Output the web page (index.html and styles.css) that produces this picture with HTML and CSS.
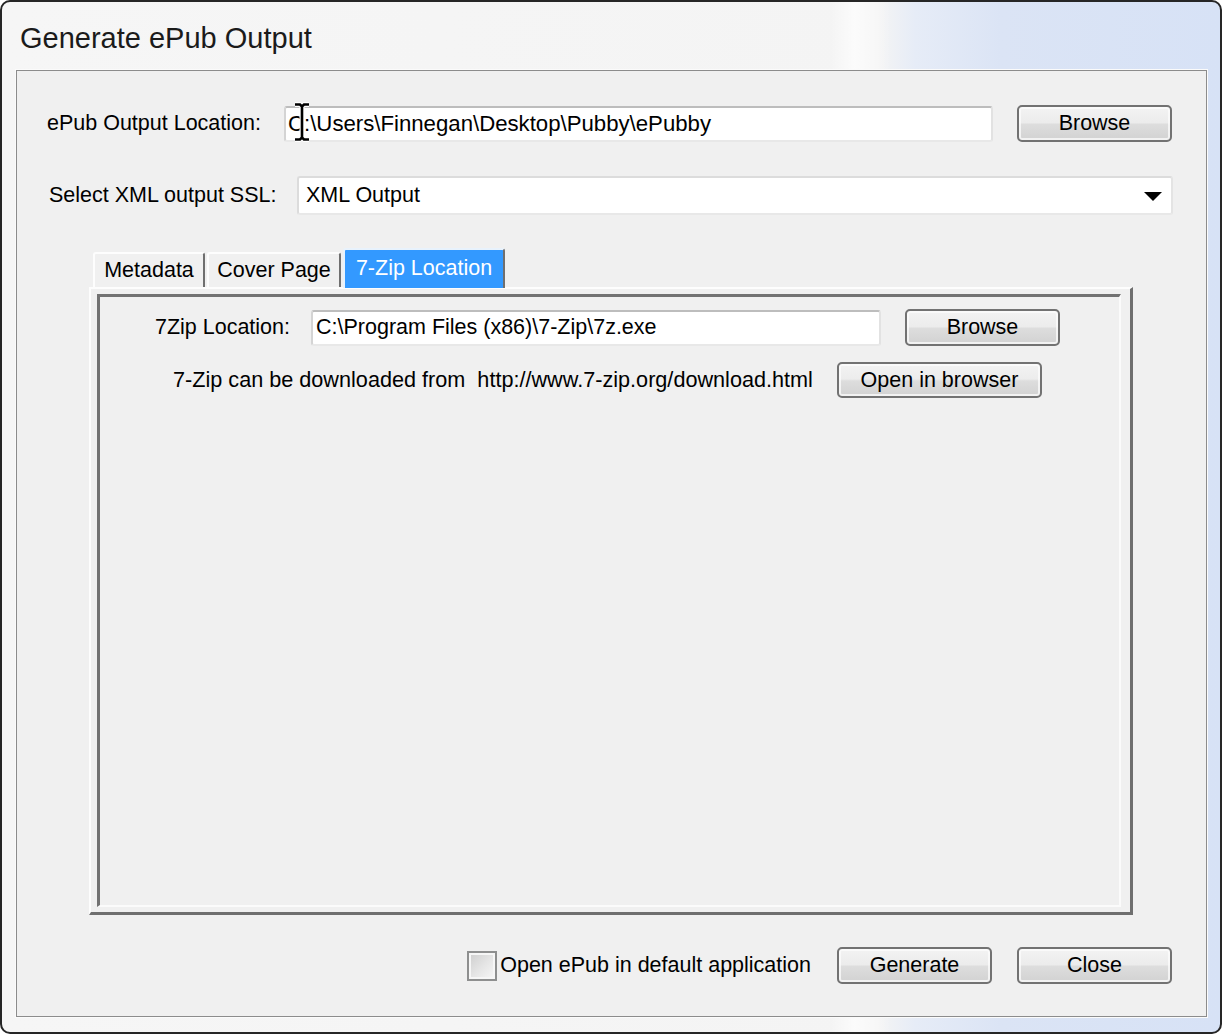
FILE: index.html
```html
<!DOCTYPE html>
<html>
<head>
<meta charset="utf-8">
<title>Generate ePub Output</title>
<link rel="stylesheet" href="styles.css">
</head>
<body>
<div class="window">
  <div class="titlebar"><span class="title">Generate ePub Output</span></div>
  <div class="client">
    <div class="row row-loc">
      <span class="lbl lbl-loc">ePub Output Location:</span>
      <div class="textbox tb-loc">C:\Users\Finnegan\Desktop\Pubby\ePubby
        <svg class="ibeam" width="18" height="40" viewBox="0 0 18 40">
          <path d="M2 2.5h5l2 2 2-2h5M9 4v32M2 37.5h5l2-2 2 2h5" stroke="#fff" stroke-width="5" fill="none" stroke-linejoin="round"/>
          <path d="M2 2.5h5l2 2 2-2h5M9 4v32M2 37.5h5l2-2 2 2h5" stroke="#000" stroke-width="2.6" fill="none"/>
        </svg>
      </div>
      <button class="btn btn-browse">Browse</button>
    </div>
    <div class="row row-ssl">
      <span class="lbl lbl-ssl">Select XML output SSL:</span>
      <div class="combo">
        <span class="combo-text">XML Output</span>
        <svg class="combo-arrow" width="18" height="9" viewBox="0 0 18 9"><path d="M0 0h18L9 9z" fill="#000"/></svg>
      </div>
    </div>
    <div class="tabstrip">
      <div class="tab tab-meta">Metadata</div>
      <div class="tab tab-cover">Cover Page</div>
      <div class="tab tab-zip tab-active">7-Zip Location</div>
    </div>
    <div class="panel">
      <div class="panel-inner">
        <div class="prow prow-zip">
          <span class="plbl">7Zip Location:</span>
          <div class="textbox tb-zip">C:\Program Files (x86)\7-Zip\7z.exe</div>
          <button class="btn btn-browse">Browse</button>
        </div>
        <div class="prow prow-dl">
          <span class="dl-text">7-Zip can be downloaded from&nbsp; http://www.7-zip.org/download.html</span>
          <button class="btn btn-open">Open in browser</button>
        </div>
      </div>
    </div>
    <div class="footer">
      <span class="check"></span>
      <span class="check-label">Open ePub in default application</span>
      <button class="btn btn-gen">Generate</button>
      <button class="btn btn-close">Close</button>
    </div>
  </div>
</div>
</body>
</html>
```

FILE: styles.css
```css
html, body {
  margin: 0;
  padding: 0;
  background: #ffffff;
}

body {
  font-family: "Liberation Sans", Arial, sans-serif;
  font-size: 21.5px;
  color: #000;
}

.window {
  box-sizing: border-box;
  width: 1222px;
  height: 1034px;
  border: 2px solid #262626;
  border-radius: 10px;
  padding: 0 13px 15px 14px;
  display: flex;
  flex-direction: column;
  background:
    linear-gradient(90deg, rgba(255,255,255,0) 0%, rgba(255,255,255,0) 68%, rgba(255,255,255,0.7) 70%, rgba(255,255,255,0) 73%),
    linear-gradient(90deg, #f6f6f6 0%, #f4f4f4 72%, #e6ecf7 75%, #dbe4f5 82%, #d7e2f6 100%);
}

.titlebar {
  height: 68px;
  box-sizing: border-box;
  padding: 22px 0 0 4px;
  flex: none;
}

.title {
  font-size: 29px;
  line-height: 29px;
  color: #1b1b1b;
  display: block;
}

.client {
  flex: 1;
  box-sizing: border-box;
  border: 1px solid #8c8c8c;
  box-shadow: 0 0 0 1px #fbfbfb;
  background: #f0f0f0;
  display: flex;
  flex-direction: column;
}

.row {
  display: flex;
  align-items: center;
  flex: none;
}

.row-loc {
  margin-top: 34px;
  height: 37px;
  padding-left: 30px;
}

.lbl-loc {
  width: 237px;
  flex: none;
}

.textbox {
  box-sizing: border-box;
  background: #fff;
  border: 2px solid;
  border-color: #bdbdbd #e2e2e2 #e8e8e8 #d4d4d4;
  border-radius: 3px;
  display: flex;
  align-items: center;
  white-space: nowrap;
  position: relative;
}

.tb-loc {
  width: 709px;
  height: 36px;
  padding-left: 2px;
  margin-right: 24px;
  font-size: 22.2px;
}

.ibeam {
  position: absolute;
  left: 7px;
  top: -6px;
}

.btn {
  box-sizing: border-box;
  font-family: "Liberation Sans", Arial, sans-serif;
  font-size: 21.5px;
  color: #000;
  border: 2px solid #727272;
  border-radius: 5px;
  background: linear-gradient(#f3f3f3 0%, #ececec 47%, #dddddd 53%, #d2d2d2 100%);
  box-shadow: inset 0 0 0 2px rgba(252, 252, 252, 0.75);
  padding: 0;
  display: flex;
  align-items: center;
  justify-content: center;
  flex: none;
}

.btn-browse {
  width: 155px;
  height: 37px;
}

.row-ssl {
  margin-top: 34px;
  height: 39px;
  padding-left: 32px;
}

.lbl-ssl {
  width: 248px;
  flex: none;
}

.combo {
  box-sizing: border-box;
  width: 876px;
  height: 39px;
  background: #fff;
  border: 2px solid;
  border-color: #dcdcdc #e4e4e4 #e8e8e8 #dcdcdc;
  border-radius: 3px;
  display: flex;
  align-items: center;
  justify-content: space-between;
  padding: 0 9px 0 7px;
}

.combo-arrow {
  display: block;
  margin-top: 1px;
}

.tabstrip {
  margin-top: 33px;
  margin-left: 76px;
  height: 39px;
  display: flex;
  align-items: flex-end;
  gap: 2px;
  flex: none;
  position: relative;
  z-index: 1;
}

.tab {
  box-sizing: border-box;
  height: 35px;
  border-top: 2px solid #fdfdfd;
  border-left: 2px solid #fdfdfd;
  border-right: 2px solid #6f6f6f;
  border-radius: 3px 3px 0 0;
  background: #f0f0f0;
  display: flex;
  align-items: center;
  justify-content: center;
  white-space: nowrap;
}

.tab-meta { width: 112px; }
.tab-cover { width: 134px; }

.tab-zip {
  width: 162px;
  height: 40px;
  margin-bottom: -1px;
  background: #3399ff;
  color: #fff;
  border-top-color: #e8f2fc;
  border-left-color: #e8f2fc;
  padding-bottom: 2px;
}

.panel {
  box-sizing: border-box;
  width: 1044px;
  height: 628px;
  margin-left: 72px;
  flex: none;
  border-style: solid;
  border-width: 2px 3px 3px 2px;
  border-color: #fdfdfd #6f6f6f #6f6f6f #fdfdfd;
  padding: 5px 9px 5px 6px;
}

.panel-inner {
  box-sizing: border-box;
  height: 100%;
  border-style: solid;
  border-width: 3px 2px 2px 3px;
  border-color: #727272 #fbfbfb #fbfbfb #727272;
  display: flex;
  flex-direction: column;
}

.prow {
  display: flex;
  align-items: center;
  flex: none;
}

.prow-zip {
  margin-top: 12px;
  height: 37px;
}

.plbl {
  width: 211px;
  box-sizing: border-box;
  text-align: right;
  padding-right: 21px;
  flex: none;
}

.tb-zip {
  width: 570px;
  height: 36px;
  padding-left: 3px;
  margin-right: 24px;
}

.prow-dl {
  margin-top: 16px;
  height: 36px;
  padding-left: 73px;
}

.dl-text {
  white-space: nowrap;
  margin-right: 24px;
  font-size: 21.65px;
}

.btn-open {
  width: 205px;
  height: 36px;
}

.footer {
  margin-top: 32px;
  height: 37px;
  display: flex;
  align-items: center;
  justify-content: flex-end;
  padding-right: 34px;
  flex: none;
}

.check {
  box-sizing: border-box;
  width: 30px;
  height: 30px;
  border: 2px solid #8e8f8f;
  box-shadow: inset 0 0 0 2px #f6f6f6;
  background: linear-gradient(135deg, #cdcdcd 0%, #e6e6e6 55%, #f7f7f7 100%);
  margin-right: 3px;
  flex: none;
}

.check-label {
  white-space: nowrap;
  margin-right: 26px;
}

.btn-gen {
  width: 155px;
  height: 37px;
  margin-right: 25px;
}

.btn-close {
  width: 155px;
  height: 37px;
}
```
